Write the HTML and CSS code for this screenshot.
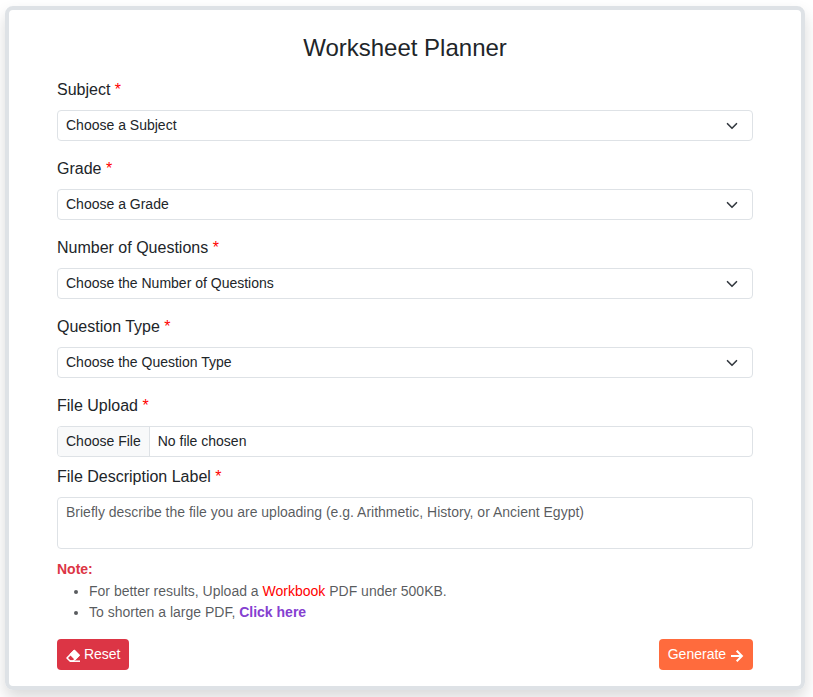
FILE: index.html
```html
<!DOCTYPE html>
<html lang="en">
<head>
<meta charset="utf-8">
<title>Worksheet Planner</title>
<link rel="stylesheet" href="styles.css">
</head>
<body>
<main class="card">
  <h1 class="title">Worksheet Planner</h1>
  <form>
    <div class="field">
      <label class="label" for="subject">Subject <span class="required">*</span></label>
      <div class="select-wrap">
        <select class="control select" id="subject"><option>Choose a Subject</option></select>
        <svg class="chevron" viewBox="0 0 16 16"><path d="m2 5 6 6 6-6"/></svg>
      </div>
    </div>
    <div class="field">
      <label class="label" for="grade">Grade <span class="required">*</span></label>
      <div class="select-wrap">
        <select class="control select" id="grade"><option>Choose a Grade</option></select>
        <svg class="chevron" viewBox="0 0 16 16"><path d="m2 5 6 6 6-6"/></svg>
      </div>
    </div>
    <div class="field">
      <label class="label" for="count">Number of Questions <span class="required">*</span></label>
      <div class="select-wrap">
        <select class="control select" id="count"><option>Choose the Number of Questions</option></select>
        <svg class="chevron" viewBox="0 0 16 16"><path d="m2 5 6 6 6-6"/></svg>
      </div>
    </div>
    <div class="field">
      <label class="label" for="type">Question Type <span class="required">*</span></label>
      <div class="select-wrap">
        <select class="control select" id="type"><option>Choose the Question Type</option></select>
        <svg class="chevron" viewBox="0 0 16 16"><path d="m2 5 6 6 6-6"/></svg>
      </div>
    </div>
    <div class="field field-tight">
      <span class="label">File Upload <span class="required">*</span></span>
      <div class="control file">
        <span class="file-button">Choose File</span>
        <span class="file-name">No file chosen</span>
      </div>
    </div>
    <div class="field field-tight">
      <label class="label" for="description">File Description Label <span class="required">*</span></label>
      <textarea class="control textarea" id="description" placeholder="Briefly describe the file you are uploading (e.g. Arithmetic, History, or Ancient Egypt)"></textarea>
    </div>
    <div class="note">
      <strong class="note-title">Note:</strong>
      <ul class="note-list">
        <li>For better results, Upload a <span class="required">Workbook</span> PDF under 500KB.</li>
        <li>To shorten a large PDF, <a class="link" href="#">Click here</a></li>
      </ul>
    </div>
    <div class="actions">
      <button class="button reset" type="reset"><svg class="icon" viewBox="0 0 14 14"><path class="icon-fill" d="M8.3 1.6 13 6.3 9.2 10.1 4.5 5.4z"/><path d="M8.3 1.6 13 6.3 7.2 12H4L1 9z"/><path d="M4 12.2h10"/></svg> Reset</button>
      <button class="button generate" type="button">Generate <svg class="icon arrow" viewBox="0 0 14 14"><path d="M1 7h10.8M6.7 1.8 11.9 7l-5.2 5.2"/></svg></button>
    </div>
  </form>
</main>
</body>
</html>
```
FILE: styles.css
```css
* {
  box-sizing: border-box;
}

body {
  display: flow-root;
  height: 697px;
  margin: 0;
  overflow: hidden;
  background: #fff;
  color: #212529;
  font: 16px/1.5 "Liberation Sans", Arial, sans-serif;
}

.card {
  width: 800px;
  height: 684px;
  margin: 6px 0 0 5px;
  padding: 23px 48px 16px;
  border: 4px solid #dee2e6;
  border-radius: 8px;
  box-shadow: 0 8px 16px rgba(0, 0, 0, 0.15);
}

.title {
  margin: 0 0 16px;
  font-size: 24px;
  font-weight: 400;
  line-height: 29px;
  text-align: center;
}

.field {
  margin-bottom: 16px;
}

.field-tight {
  margin-bottom: 8px;
}

.label {
  display: block;
  margin-bottom: 8px;
}

.required {
  color: #f00;
}

.control {
  display: block;
  width: 100%;
  height: 31px;
  margin: 0;
  padding: 4px 8px;
  border: 1px solid #dee2e6;
  border-radius: 4px;
  background: #fff;
  color: #212529;
  font: 14px/21px "Liberation Sans", Arial, sans-serif;
}

.select-wrap {
  position: relative;
}

.select {
  appearance: none;
}

.chevron {
  position: absolute;
  top: 10px;
  right: 15px;
  width: 12px;
  height: 12px;
  fill: none;
  stroke: #343a40;
  stroke-width: 2.2;
  stroke-linecap: round;
  stroke-linejoin: round;
  pointer-events: none;
}

.file {
  display: flex;
  padding: 0;
  overflow: hidden;
}

.file-button {
  padding: 4px 8px;
  border-right: 1px solid #dee2e6;
  background: #f8f9fa;
}

.file-name {
  padding: 4px 8px;
}

.textarea {
  height: 52px;
  resize: none;
}

.textarea::placeholder {
  color: rgba(33, 37, 41, 0.75);
  opacity: 1;
}

.note {
  padding-top: 2px;
  color: rgba(33, 37, 41, 0.75);
  font-size: 14px;
  line-height: 21px;
}

.note-title {
  display: block;
  color: #dc3545;
}

.note-list {
  margin: 1px 0 16px;
  padding-left: 32px;
}

.link {
  color: #8540d0;
  font-weight: 700;
  text-decoration: none;
}

.actions {
  display: flex;
  justify-content: space-between;
}

.button {
  height: 31px;
  padding: 4px 8px;
  border: 1px solid transparent;
  border-radius: 4px;
  color: #fff;
  font: 14px/21px "Liberation Sans", Arial, sans-serif;
}

.reset {
  background: #dc3545;
}

.generate {
  background: #ff6b3d;
}

.icon {
  width: 14px;
  height: 14px;
  margin-bottom: -1px;
  fill: none;
  stroke: currentColor;
  stroke-width: 1.5;
  stroke-linejoin: round;
  vertical-align: middle;
}

.icon-fill {
  fill: currentColor;
}

.arrow {
  stroke-width: 2;
  stroke-linejoin: miter;
}
```
